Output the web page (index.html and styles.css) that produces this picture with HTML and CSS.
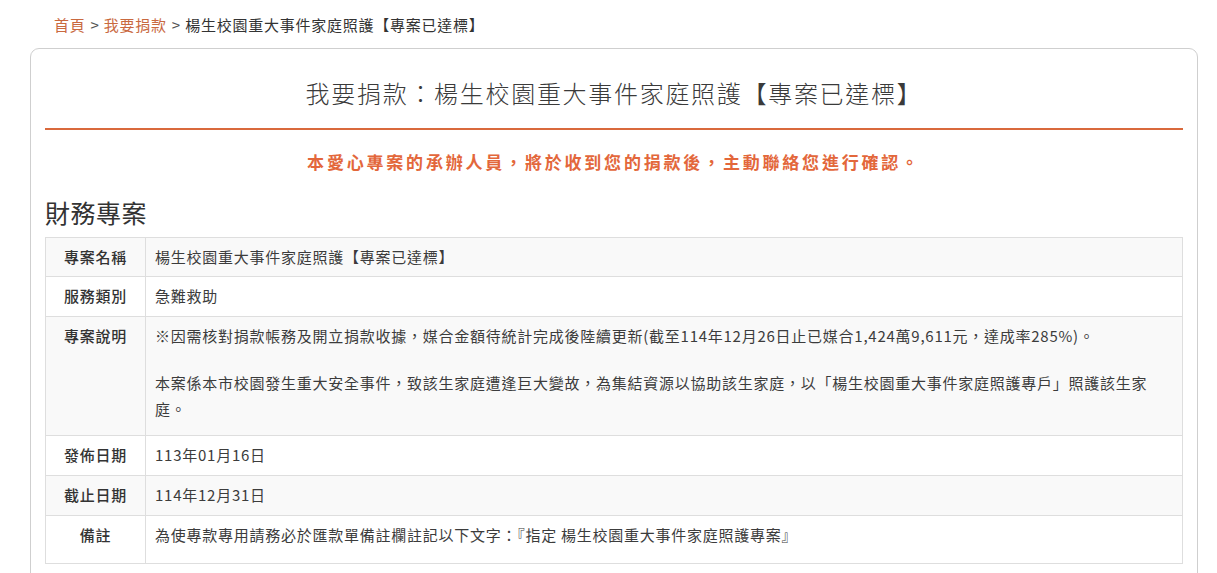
FILE: index.html
```html
<!DOCTYPE html>
<html lang="zh-Hant">
<head>
<meta charset="utf-8">
<title>我要捐款</title>
<link rel="stylesheet" href="styles.css">
</head>
<body>
<div class="page">
  <nav class="crumbs">
    <a href="#" class="crumb-link">首頁</a><span class="sep">&gt;</span><a href="#" class="crumb-link">我要捐款</a><span class="sep">&gt;</span><span class="crumb-current">楊生校園重大事件家庭照護【專案已達標】</span>
  </nav>
  <section class="card">
    <h1 class="title">我要捐款：楊生校園重大事件家庭照護【專案已達標】</h1>
    <p class="notice">本愛心專案的承辦人員，將於收到您的捐款後，主動聯絡您進行確認。</p>
    <h2 class="section-title">財務專案</h2>
    <table class="info">
      <tbody>
        <tr>
          <th>專案名稱</th>
          <td>楊生校園重大事件家庭照護【專案已達標】</td>
        </tr>
        <tr>
          <th>服務類別</th>
          <td>急難救助</td>
        </tr>
        <tr>
          <th>專案說明</th>
          <td>
            <p class="desc-first">※因需核對捐款帳務及開立捐款收據，媒合金額待統計完成後陸續更新(截至114年12月26日止已媒合1,424萬9,611元，達成率285%)。</p>
            <p class="desc-last">本案係本市校園發生重大安全事件，致該生家庭遭逢巨大變故，為集結資源以協助該生家庭，以「楊生校園重大事件家庭照護專戶」照護該生家庭。</p>
          </td>
        </tr>
        <tr>
          <th>發佈日期</th>
          <td>113年01月16日</td>
        </tr>
        <tr>
          <th>截止日期</th>
          <td>114年12月31日</td>
        </tr>
        <tr>
          <th>備註</th>
          <td><p class="note">為使專款專用請務必於匯款單備註欄註記以下文字：『指定 楊生校園重大事件家庭照護專案』</p></td>
        </tr>
      </tbody>
    </table>
  </section>
</div>
</body>
</html>
```

FILE: styles.css
```css
* { box-sizing: border-box; }

html, body {
  margin: 0;
  padding: 0;
  background: #fff;
}

body {
  font-family: "Noto Sans CJK TC", "Noto Sans", "Liberation Sans", sans-serif;
  color: #333;
  font-size: 15px;
}

.page {
  padding: 14px 19px 0 30px;
}

.crumbs {
  padding-left: 24px;
  font-size: 15px;
  line-height: 22px;
  letter-spacing: 0.75px;
  color: #444;
  height: 22px;
}

.crumb-link {
  color: #c9693f;
  text-decoration: none;
}

.sep {
  color: #555;
  margin: 0 5px;
  letter-spacing: 0;
}

.crumb-current {
  color: #333;
}

.card {
  margin-top: 12px;
  border: 1px solid #cfcfcf;
  border-radius: 9px;
  padding: 0 14px 40px;
}

.title {
  margin: 0;
  padding: 26px 0 17px;
  font-size: 24px;
  line-height: 36px;
  letter-spacing: 1.7px;
  font-weight: 300;
  color: #3a3a3a;
  text-align: center;
  border-bottom: 2px solid #d9693c;
}

.notice {
  margin: 19px 0 0;
  font-size: 17px;
  line-height: 26px;
  letter-spacing: 2.8px;
  font-weight: 700;
  color: #e3673b;
  text-align: center;
}

.section-title {
  margin: 20px 0 8px;
  font-size: 25px;
  line-height: 34px;
  letter-spacing: 0.5px;
  font-weight: 400;
  color: #333;
}

.info {
  width: 100%;
  border-collapse: collapse;
  border: 1px solid #dedede;
  font-size: 15px;
  letter-spacing: 0.75px;
  line-height: 26px;
}

.info th,
.info td {
  border: 1px solid #dedede;
  padding: 6px 9px 6px;
  vertical-align: top;
}

.info th {
  width: 100px;
  text-align: center;
  font-weight: 500;
  color: #333;
}

.info td {
  text-align: left;
  font-weight: 400;
  color: #3c3c3c;
}

.info tbody tr:nth-child(odd) {
  background: #f9f9f9;
}

.info tbody tr + tr th,
.info tbody tr + tr td {
  padding-bottom: 7px;
}

.info p {
  margin: 0;
}

.info .desc-first {
  margin-bottom: 21px;
}

.info .desc-last {
  margin-bottom: 6px;
}

.info .note {
  margin-bottom: 8px;
}
```
